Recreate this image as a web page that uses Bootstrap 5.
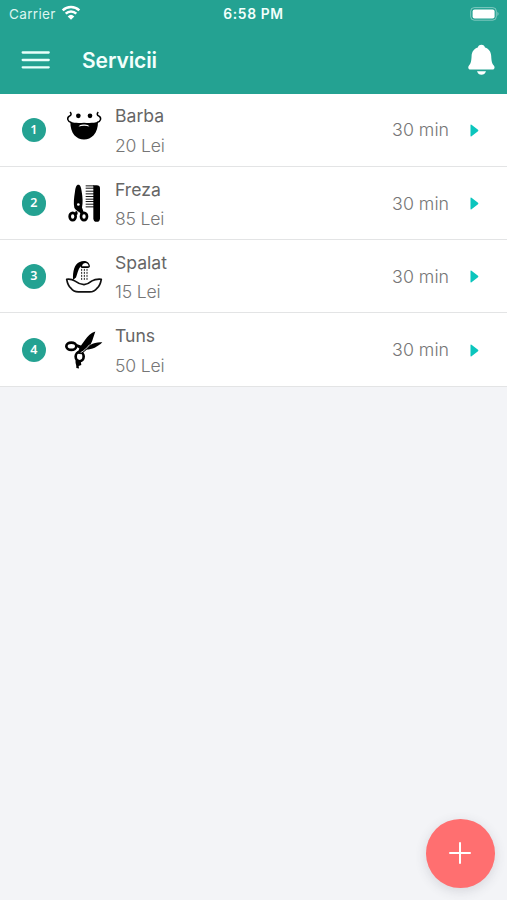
<!DOCTYPE html>
<html lang="ro">
<head>
<meta charset="utf-8">
<meta name="viewport" content="width=device-width, initial-scale=1">
<title>Servicii</title>
<link href="https://cdn.jsdelivr.net/npm/bootstrap@5.3.0/dist/css/bootstrap.min.css" rel="stylesheet">
<style>
body{background:#f3f4f7;font-family:Inter,"Liberation Sans",sans-serif;overflow:hidden}
svg{display:block;flex:none}
.app-head{background:#24a292;height:93.5px;color:#f2fffc}
.status-bar{height:27px;padding:0 7px 0 9px;font-size:13.6px;line-height:27px}
.carrier{letter-spacing:.3px;padding-top:1px;color:#dcf5f0}
.clock{left:0;right:0;text-align:center;font-weight:600;font-size:13.8px;letter-spacing:.65px;padding-top:1px}
.wifi{left:61px;top:5px}
.title-bar{height:66.5px;padding:0 12px 0 21px}
.page-title{font-size:21px;font-weight:600;margin-left:32px;letter-spacing:-.1px}
.service.list-group-item{height:73.3px;border:0;border-bottom:1.5px solid #e3e4e5;padding:1px 28px 0 21.5px;background:#fff}
.num{width:24.5px;height:24.5px;border-radius:50%;background:#24a292;color:#fff;font:600 12.5px/24.5px "Noto Sans",sans-serif;text-align:center}
.pic{margin:-1px 0 0 10px}
.name{font-size:17.6px;line-height:29.3px;color:#666;padding-top:1px}
.price{font-size:17.6px;line-height:29.3px;color:#767676;font-weight:300;letter-spacing:-.2px}
.mins{font-size:17.8px;color:#767676;font-weight:300;padding-top:1px}
.arrow{margin-left:21px}
.fab{right:12.5px;bottom:12.5px;width:68.5px;height:68.5px;background:#ff6f70;border:0;box-shadow:0 3px 12px rgba(60,60,80,.16)}
</style>
<script src="https://cdn.jsdelivr.net/npm/bootstrap@5.3.0/dist/js/bootstrap.bundle.min.js"></script>
</head>
<body class="vh-100">
<header class="app-head">
  <div class="status-bar position-relative d-flex align-items-center justify-content-between">
    <span class="carrier">Carrier</span>
    <svg class="wifi position-absolute" width="20" height="16" viewBox="0 0 20 16" fill="none" stroke="#fff" stroke-width="2.5"><path d="M1.7 5.3a12 12 0 0 1 16.6 0M4.7 8.6a7.6 7.6 0 0 1 10.6 0"/><path d="M10 14.8 6.7 11.4a4.8 4.8 0 0 1 6.6 0Z" fill="#fff" stroke="none"/></svg>
    <span class="clock position-absolute">6:58 PM</span>
    <svg width="30" height="14" viewBox="0 0 30 14"><rect x=".7" y=".6" width="25.6" height="12.6" rx="3.6" fill="none" stroke="#fff" stroke-opacity=".42"/><rect x="2.6" y="2.4" width="22" height="9" rx="2" fill="#fff"/><path d="M27.5 4.8q2 2.1 0 4.2Z" fill="#fff" fill-opacity=".5"/></svg>
  </div>
  <div class="title-bar d-flex align-items-center">
    <svg width="29" height="20" viewBox="0 0 29 20" stroke="#e8fffb" stroke-width="2.3" stroke-linecap="round"><path d="M1.7 2.5h26M1.7 10h26M1.7 17.3h26"/></svg>
    <span class="page-title">Servicii</span>
    <svg class="ms-auto" width="27" height="32" viewBox="0 0 27 32" fill="#fff"><path d="M13.4.8c-2 0-3.3 1.2-3.6 2.7C5.8 4.7 3.8 8 3.6 12c-.2 5-.8 7.500-2.600 9.500C-.4 23.200.2 25.500 2.500 25.500h21.800c2.300 0 2.900-2.300 1.500-4-1.800-2-2.400-4.500-2.600-9.500-.2-4-2.200-7.300-6.200-8.500C16.700 2 15.400.8 13.400.8ZM9 27.200h9c-.8 2.400-2.400 3.600-4.500 3.600S9.800 29.600 9 27.200Z"/></svg>
  </div>
</header>
<main class="list-group rounded-0">
  <div class="service list-group-item d-flex align-items-center">
    <span class="num">1</span>
    <svg class="pic" width="59" height="60" viewBox="0 4.500 177 180"><g fill="none" stroke="#000" stroke-width="4.500"><path d="M42 41c6 5 3 9-2 12-8 5-6 16 6 19M127 41c-6 5-3 9 2 12 8 5 6 16-6 19"/></g><circle cx="67" cy="52" r="7"/><circle cx="102" cy="52" r="7"/><path d="M43 70c11 4 24 4 41 3 17 1 31 1 42-3 0 16-4 31-13 40-8 8-18 13-29 13s-21-5-29-13c-8-9-12-24-12-40Z"/><path d="M67 84q5-7 17-6 12-1 17 6-16-5-34 0Z" fill="#fff"/></svg>
    <div><div class="name">Barba</div><div class="price">20 Lei</div></div>
    <span class="mins ms-auto">30 min</span>
    <svg class="arrow" width="9" height="13" viewBox="0 0 9 13" fill="#0bc5bd"><path d="M.5 1.200Q.5 0 1.500.8L8 5.800q.8.700 0 1.400L1.500 12.200Q.5 13 .5 11.800Z"/></svg>
  </div>
  <div class="service list-group-item d-flex align-items-center">
    <span class="num">2</span>
    <svg class="pic" width="59" height="60" viewBox="0 2.400 177 180"><g fill="none" stroke="#000" stroke-width="8"><ellipse cx="50" cy="133" rx="9" ry="11"/><ellipse cx="84" cy="133" rx="9" ry="11"/></g><path d="M67 38c-6 0-8 7-10 20-3 19-5 35-2 49l5 8-4 9 7 5 5-12 8 11 7-8-5-14c3-15 2-30-1-48-2-13-4-20-10-20Z"/><path d="m50 108 14 9 5 12" fill="none" stroke="#fff" stroke-width="2.500"/><circle cx="67" cy="97" r="4" fill="#fff"/><path d="M112 39h10q10 0 10 10v89q0 11-10 11t-10-11Z"/><path d="M89 41h25M89 48h25M89 57h25M89 65h25M89 73h25M89 81h25M89 88h25M89 96h25M89 104h25" stroke="#000" stroke-width="2.800"/></svg>
    <div><div class="name">Freza</div><div class="price">85 Lei</div></div>
    <span class="mins ms-auto">30 min</span>
    <svg class="arrow" width="9" height="13" viewBox="0 0 9 13" fill="#0bc5bd"><path d="M.5 1.200Q.5 0 1.500.8L8 5.800q.8.700 0 1.400L1.500 12.200Q.5 13 .5 11.800Z"/></svg>
  </div>
  <div class="service list-group-item d-flex align-items-center">
    <span class="num">3</span>
    <svg class="pic" width="59" height="60" viewBox="0 .3 177 180"><path d="M51 102c-1-27 4-47 20-54 13-6 29-3 31 13q-1 5-6 5H78c-3 0-4-2-4-5-8 9-10 23-14 34Z"/><path d="M78 61c2-12 18-13 20 0Z" fill="#fff"/><path d="M77 69v34M85 69v36M93 69v34" fill="none" stroke="#222" stroke-width="3" stroke-dasharray="6 3"/><path d="M32 100c10-1 17 0 24 5 9 7 15 10 28 11 10-1 17-5 24-11 8-5 16-6 28-5-2 11-5 21-13 27-6 8-13 11-22 11H67c-12 0-17-4-22-11-8-6-11-16-13-27Z" fill="#fff" stroke="#111" stroke-width="5" stroke-linejoin="round"/></svg>
    <div><div class="name">Spalat</div><div class="price">15 Lei</div></div>
    <span class="mins ms-auto">30 min</span>
    <svg class="arrow" width="9" height="13" viewBox="0 0 9 13" fill="#0bc5bd"><path d="M.5 1.200Q.5 0 1.500.8L8 5.800q.8.700 0 1.400L1.500 12.200Q.5 13 .5 11.800Z"/></svg>
  </div>
  <div class="service list-group-item d-flex align-items-center">
    <span class="num">4</span>
    <svg class="pic" width="59" height="60" viewBox="0 -1.800 177 180"><g fill="none" stroke="#000" stroke-width="8"><ellipse cx="46" cy="77" rx="15" ry="11"/><ellipse cx="71" cy="108" rx="12" ry="14"/></g><path d="M118 33c-13 4-23 14-31 25L75 75l-14-5-1 7 10 7-6 15 12 2 20-17c11-13 16-33 22-51Z"/><path d="M139 65c-14-1-26 2-36 8l-12 14c17 0 34-8 48-22Z"/><path d="M74 96c10-5 18-13 27-24" fill="none" stroke="#fff" stroke-width="2.500"/><path d="M59 119c-2 10 3 12 2 23l8 2-1-8 8-3-2-13Z"/></svg>
    <div><div class="name">Tuns</div><div class="price">50 Lei</div></div>
    <span class="mins ms-auto">30 min</span>
    <svg class="arrow" width="9" height="13" viewBox="0 0 9 13" fill="#0bc5bd"><path d="M.5 1.200Q.5 0 1.500.8L8 5.800q.8.700 0 1.400L1.500 12.200Q.5 13 .5 11.800Z"/></svg>
  </div>
</main>
<button class="fab btn rounded-circle position-fixed p-0 d-flex align-items-center justify-content-center" aria-label="Adauga">
  <svg width="22" height="22" viewBox="0 0 22 22" stroke="#fff" stroke-width="2" stroke-linecap="round"><path d="M11 1v20M1 11h20"/></svg>
</button>
</body>
</html>
